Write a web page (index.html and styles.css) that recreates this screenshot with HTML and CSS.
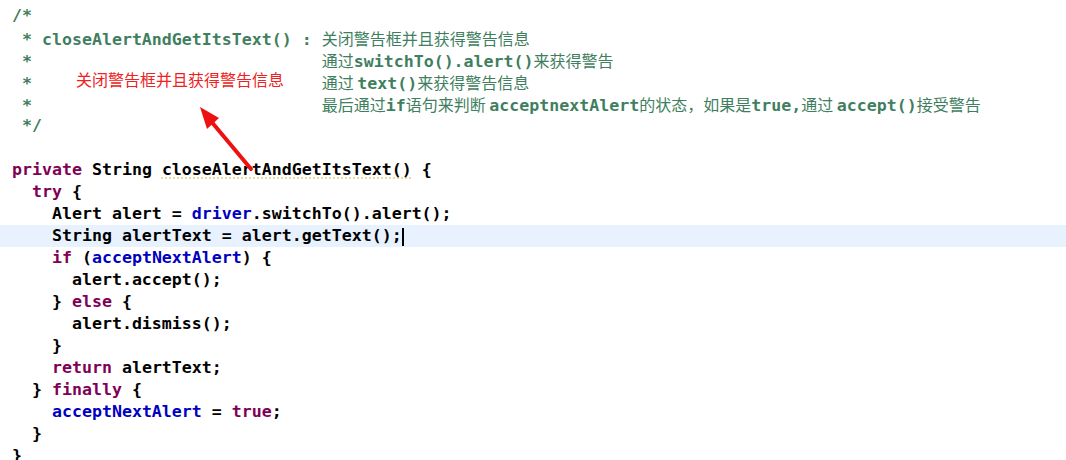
FILE: index.html
```html
<!DOCTYPE html>
<html>
<head>
<meta charset="utf-8">
<link rel="stylesheet" href="styles.css">
</head>
<body>
<div class="editor">
  <div class="ln"><span class="cm">/*</span></div>
  <div class="ln"><span class="cm"> * closeAlertAndGetItsText() : <span class="cn">关闭警告框并且获得警告信息</span></span></div>
  <div class="ln"><span class="cm"> *                             <span class="cn">通过</span>switchTo().alert()<span class="cn">来获得警告</span></span></div>
  <div class="ln"><span class="cm"> *                             <span class="cn">通过 </span>text()<span class="cn">来获得警告信息</span></span></div>
  <div class="ln"><span class="cm"> *                             <span class="cn">最后通过</span>if<span class="cn">语句来判断 </span>acceptnextAlert<span class="cn">的状态，如果是</span>true,<span class="cn">通过 </span>accept()<span class="cn">接受警告</span></span></div>
  <div class="ln"><span class="cm"> */</span></div>
  <div class="ln"></div>
  <div class="ln"><span class="kw">private</span> String <span class="warn">closeAlertAndGetItsText()</span> {</div>
  <div class="ln">  <span class="kw">try</span> {</div>
  <div class="ln">    Alert alert = <span class="fd">driver</span>.switchTo().alert();</div>
  <div class="ln current">    String alertText = alert.getText();<span class="caret"></span></div>
  <div class="ln">    <span class="kw">if</span> (<span class="fd">acceptNextAlert</span>) {</div>
  <div class="ln">      alert.accept();</div>
  <div class="ln">    } <span class="kw">else</span> {</div>
  <div class="ln">      alert.dismiss();</div>
  <div class="ln">    }</div>
  <div class="ln">    <span class="kw">return</span> alertText;</div>
  <div class="ln">  } <span class="kw">finally</span> {</div>
  <div class="ln">    <span class="fd">acceptNextAlert</span> = <span class="kw">true</span>;</div>
  <div class="ln">  }</div>
  <div class="ln">}</div>
</div>
<div class="note">关闭警告框并且获得警告信息</div>
<svg class="arrow" width="1066" height="460" viewBox="0 0 1066 460">
  <line x1="251" y1="169" x2="210" y2="120" stroke="#ee1111" stroke-width="4" stroke-linecap="round"/>
  <polygon points="200,107 219,118 207,129" fill="#ee1111"/>
</svg>
</body>
</html>
```

FILE: styles.css
```css
html, body {
  margin: 0;
  padding: 0;
  background: #ffffff;
  width: 1066px;
  height: 460px;
  overflow: hidden;
}

.editor {
  padding-top: 5px;
  font-family: "DejaVu Sans Mono", "Liberation Mono", monospace;
  font-size: 16.6px;
  font-weight: bold;
  color: #000000;
}

.ln {
  height: 22px;
  line-height: 22px;
  white-space: pre;
  padding-left: 12px;
  overflow: visible;
}

.current {
  background: #e8f2fe;
}

.cm {
  color: #3f7f5f;
}

.cn {
  font-family: "Noto Sans CJK SC", sans-serif;
  font-size: 16px;
  font-weight: normal;
  line-height: 22px;
}

.kw {
  color: #7f0055;
}

.fd {
  color: #0000c0;
}

.warn {
  text-decoration: underline dotted #e8d48a;
  text-underline-offset: 3px;
}

.caret {
  display: inline-block;
  width: 2px;
  height: 18px;
  background: #000000;
  vertical-align: middle;
}

.note {
  position: absolute;
  left: 76px;
  top: 68px;
  font-family: "Noto Sans CJK SC", sans-serif;
  font-size: 16px;
  line-height: 22px;
  color: #ee2222;
}

.arrow {
  position: absolute;
  left: 0;
  top: 0;
  pointer-events: none;
}
```
